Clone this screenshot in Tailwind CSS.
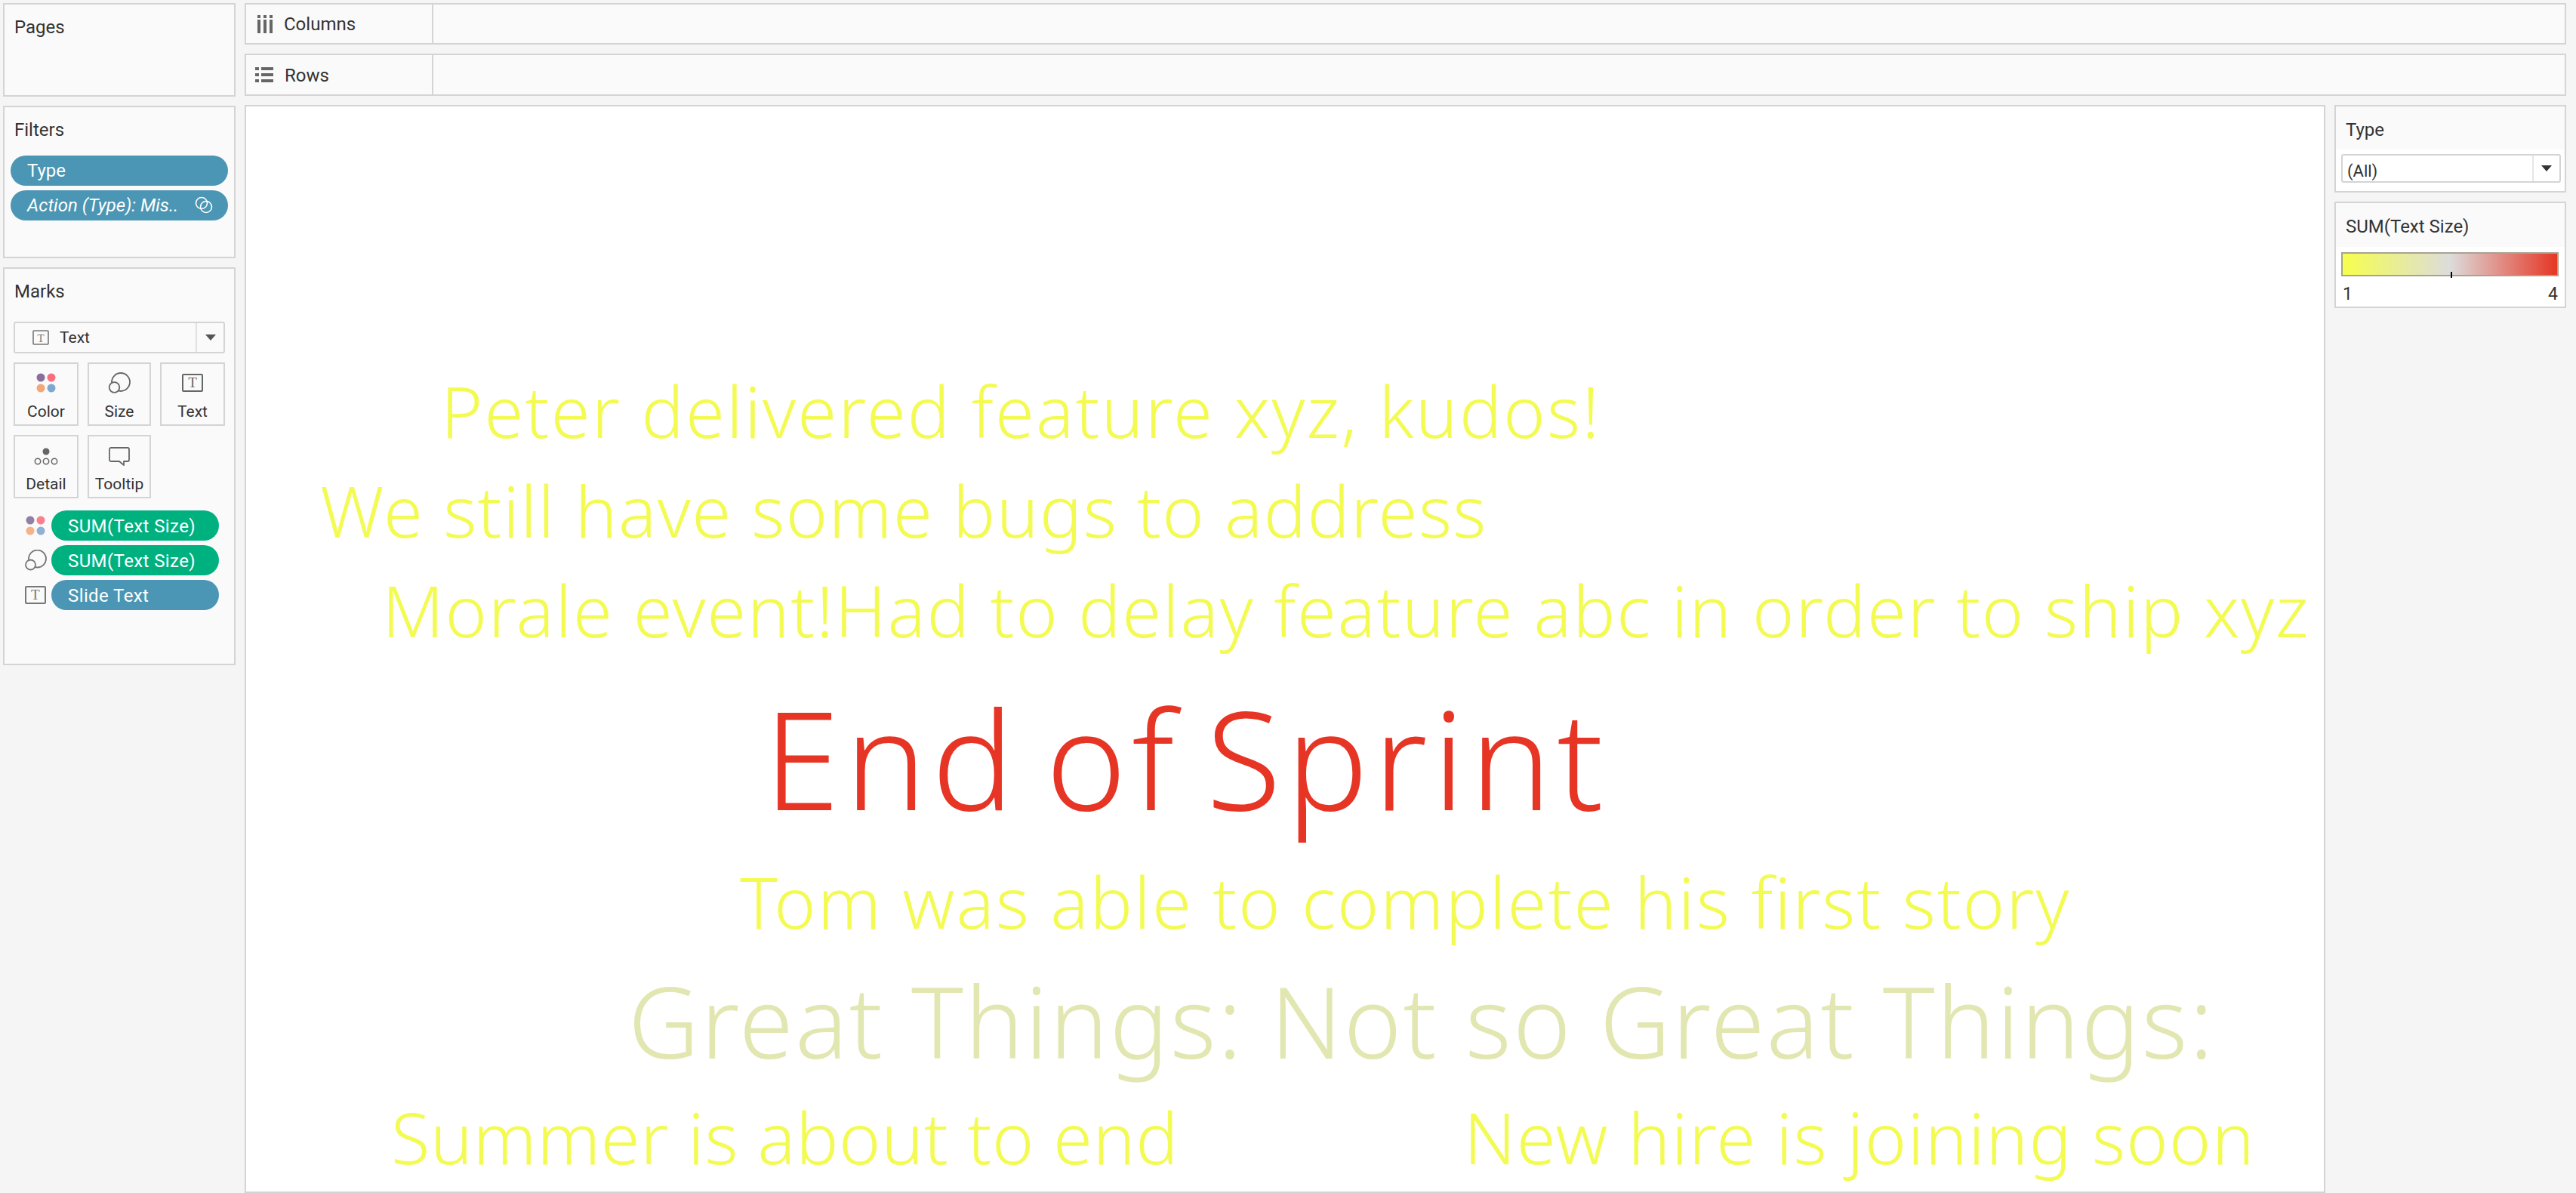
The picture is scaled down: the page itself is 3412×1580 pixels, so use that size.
<!DOCTYPE html>
<html><head><meta charset="utf-8"><script src="https://cdn.jsdelivr.net/npm/@tailwindcss/browser@4"></script></head>
<body class="bg-[#f5f5f5]">
<div class="w-[3412px] h-[1580px] overflow-hidden pl-[4px] pt-[4px] flex gap-[12px] font-['Roboto',sans-serif] text-[24px] text-[#333]">
 <div class="w-[308px] shrink-0 flex flex-col gap-[12px]">
  <section class="h-[124px] border-2 border-[#d4d4d4] bg-[#fafafa] pl-[13px] pt-[12px]">Pages</section>
  <section class="h-[202px] border-2 border-[#d4d4d4] bg-[#fafafa]">
   <div class="pl-[13px] pt-[12px] h-[64px]">Filters</div>
   <div class="flex flex-col gap-[6px] px-[8px]">
    <div class="h-[40px] rounded-full bg-[#4b96b4] text-white pl-[22px] flex items-center">Type</div>
    <div class="h-[40px] rounded-full bg-[#4b96b4] text-white pl-[22px] flex items-center italic whitespace-nowrap">Action (Type): Mis..
     <svg class="ml-auto mr-[20px]" width="24" height="24" viewBox="0 0 24 24" fill="none" stroke="#fff" stroke-width="1.6"><circle cx="9" cy="9" r="7.5"/><circle cx="15" cy="14" r="7.5"/></svg>
    </div>
   </div>
  </section>
  <section class="h-[527px] border-2 border-[#d4d4d4] bg-[#fafafa]">
   <div class="pl-[13px] pt-[12px] h-[70px]">Marks</div>
   <div class="mx-[12px] w-[280px] h-[42px] border-2 border-[#d4d4d4] rounded-[3px] flex items-center text-[21px]">
    <svg class="ml-[23px]" width="22" height="20" viewBox="0 0 22 20" fill="none"><rect x="1" y="1" width="20" height="18" rx="1" stroke="#777" stroke-width="1.6"/><text x="11" y="15.500" text-anchor="middle" font-family="Liberation Serif" font-size="15" fill="#777">T</text></svg>
    <span class="ml-[14px] pt-[2px]">Text</span>
    <div class="ml-auto w-[37px] h-full border-l-2 border-[#e0e0e0] flex items-center justify-center"><svg width="14" height="8" viewBox="0 0 14 8"><path d="M0 0h14l-7 8z" fill="#555"/></svg></div>
   </div>
   <div class="mx-[12px] mt-[12px] w-[280px] grid grid-cols-[86px_84px_86px] gap-[12px] text-[21px] text-center leading-none">
    <div class="h-[84px] border-2 border-[#d4d4d4] flex flex-col items-center pt-[12px] gap-[15px]">
     <svg width="26" height="26" viewBox="0 0 26 26"><circle cx="6" cy="6" r="5.500" fill="#8a6f9e"/><circle cx="20" cy="6" r="5.500" fill="#f96f80"/><circle cx="6" cy="20" r="5.500" fill="#f3a677"/><circle cx="20" cy="20" r="5.500" fill="#7fa8d0"/></svg><span>Color</span></div>
    <div class="h-[84px] border-2 border-[#d4d4d4] flex flex-col items-center pt-[11px] gap-[14px]">
     <svg width="30" height="28" viewBox="0 0 30 28" fill="#fafafa" stroke="#666" stroke-width="1.8"><circle cx="17" cy="13" r="12"/><circle cx="8.500" cy="20" r="6.800"/></svg><span>Size</span></div>
    <div class="h-[84px] border-2 border-[#d4d4d4] flex flex-col items-center pt-[13px] gap-[16px]">
     <svg width="28" height="24" viewBox="0 0 28 24" fill="none"><rect x="1" y="1" width="26" height="22" rx="1" stroke="#666" stroke-width="2"/><text x="14" y="18" text-anchor="middle" font-family="Liberation Serif" font-size="19" fill="#666">T</text></svg><span>Text</span></div>
    <div class="h-[84px] border-2 border-[#d4d4d4] flex flex-col items-center pt-[14px] gap-[15px]">
     <svg width="32" height="24" viewBox="0 0 32 24" fill="none" stroke="#666" stroke-width="1.500"><circle cx="16" cy="6" r="4.500" fill="#666" stroke="none"/><circle cx="5" cy="19" r="3.700"/><circle cx="16" cy="19" r="3.700"/><circle cx="27" cy="19" r="3.700"/></svg><span>Detail</span></div>
    <div class="h-[84px] border-2 border-[#d4d4d4] flex flex-col items-center pt-[13px] gap-[13px] whitespace-nowrap">
     <svg width="30" height="27" viewBox="0 0 30 27" fill="none" stroke="#666" stroke-width="1.800" stroke-linejoin="round"><path d="M4 2h22a2 2 0 0 1 2 2v14a2 2 0 0 1-2 2h-5v5l-6-5H4a2 2 0 0 1-2-2V4a2 2 0 0 1 2-2z"/></svg><span>Tooltip</span></div>
   </div>
   <div class="mt-[16px] flex flex-col gap-[6px] pl-[27px] text-[24px] tracking-[0.4px]">
    <div class="flex items-center gap-[6px]"><svg class="w-[29px] h-[28px]" viewBox="0 0 29 28"><circle cx="7" cy="7" r="5.500" fill="#9180a5"/><circle cx="21" cy="7" r="5.500" fill="#fa8090"/><circle cx="7" cy="21" r="5.500" fill="#f5b188"/><circle cx="21" cy="21" r="5.500" fill="#92b0d4"/></svg><div class="w-[222px] h-[40px] rounded-full bg-[#00b180] text-white pl-[22px] pt-[1px] flex items-center">SUM(Text Size)</div></div>
    <div class="flex items-center gap-[6px]"><svg class="w-[29px] h-[28px]" viewBox="0 0 29 28" fill="#fafafa" stroke="#777" stroke-width="1.800"><circle cx="16.500" cy="12" r="11.500"/><circle cx="7.500" cy="20" r="6.500"/></svg><div class="w-[222px] h-[40px] rounded-full bg-[#00b180] text-white pl-[22px] pt-[1px] flex items-center">SUM(Text Size)</div></div>
    <div class="flex items-center gap-[6px]"><svg class="w-[29px] h-[28px]" viewBox="0 0 29 28" fill="none"><rect x="1" y="3" width="26" height="22" rx="1" stroke="#777" stroke-width="2"/><text x="14" y="20" text-anchor="middle" font-family="Liberation Serif" font-size="19" fill="#777">T</text></svg><div class="w-[222px] h-[40px] rounded-full bg-[#4b96b4] text-white pl-[22px] pt-[1px] flex items-center">Slide Text</div></div>
   </div>
  </section>
 </div>
 <div class="w-[3075px] shrink-0 flex flex-col gap-[12px]">
  <div class="h-[56px] border-2 border-[#d4d4d4] bg-[#fafafa] flex items-center">
   <div class="w-[248px] h-full border-r-2 border-[#d4d4d4] flex items-center pl-[14px] gap-[14px]">
    <svg width="22" height="24" viewBox="0 0 22 24" fill="#666"><rect x="1" y="0" width="4" height="4"/><rect x="1" y="6" width="4" height="18"/><rect x="9" y="0" width="4" height="4"/><rect x="9" y="6" width="4" height="18"/><rect x="17" y="0" width="4" height="4"/><rect x="17" y="6" width="4" height="18"/></svg><span>Columns</span></div>
  </div>
  <div class="h-[56px] border-2 border-[#d4d4d4] bg-[#fafafa] flex items-center">
   <div class="w-[248px] h-full border-r-2 border-[#d4d4d4] flex items-center pl-[12px] gap-[15px]">
    <svg width="24" height="20" viewBox="0 0 24 20" fill="#666"><rect x="0" y="0" width="5" height="4"/><rect x="8" y="0" width="16" height="4"/><rect x="0" y="8" width="5" height="4"/><rect x="8" y="8" width="16" height="4"/><rect x="0" y="16" width="5" height="4"/><rect x="8" y="16" width="16" height="4"/></svg><span class="pt-[2px]">Rows</span></div>
  </div>
  <div class="flex gap-[12px] h-[1460px]">
   <main class="relative w-[2756px] h-full border-2 border-[#d4d4d4] bg-white font-['Noto_Sans',sans-serif] font-[350] text-[94px] leading-none whitespace-nowrap text-[#f3fb52]">
    <div class="absolute left-[258px] top-[356px] tracking-[2.15px]">Peter delivered feature xyz, kudos!</div>
    <div class="absolute left-[98px] top-[488px] tracking-[1.37px]">We still have some bugs to address</div>
    <div class="absolute left-[180px] top-[620px] tracking-[1.65px]">Morale event!Had to delay feature abc in order to ship xyz</div>
    <div class="absolute left-[686px] top-[772px] text-[181px] text-[#e73525] tracking-[7.2px] [word-spacing:-19px]">End of Sprint</div>
    <div class="absolute left-[654px] top-[1006px] tracking-[2px]">Tom was able to complete his first story</div>
    <div class="absolute left-[506px] top-[1146px] text-[130px] text-[#e2e6b0] tracking-[2.14px]">Great Things: Not so Great Things:</div>
    <div class="absolute left-[192px] top-[1318px] tracking-[0.6px]">Summer is about to end</div>
    <div class="absolute left-[1613px] top-[1318px] tracking-[1.3px]">New hire is joining soon</div>
   </main>
   <div class="w-[307px] flex flex-col gap-[12px]">
    <section class="h-[116px] border-2 border-[#d4d4d4] bg-white">
     <div class="h-[57px] bg-[#fafafa] pl-[13px] pt-[13px]">Type</div>
     <div class="mx-[7px] mt-[6px] h-[38px] w-[291px] border-2 border-[#d4d4d4] rounded-[3px] flex items-center pl-[6px] text-[22px]"><span class="pt-[8px]">(All)</span>
      <div class="ml-auto w-[36px] h-full border-l-2 border-[#e6e6e6] flex items-center justify-center"><svg width="14" height="8" viewBox="0 0 14 8"><path d="M0 0h14l-7 8z" fill="#333"/></svg></div>
     </div>
    </section>
    <section class="h-[141px] border-2 border-[#d4d4d4] bg-white">
     <div class="h-[58px] bg-[#fafafa] pl-[13px] pt-[13px]">SUM(Text Size)</div>
     <div class="relative mx-[7px] mt-[7px] h-[32px] w-[288px] border-2 border-[#a8a390] bg-[linear-gradient(to_right,#f6ff4d,#dcdcdc_50%,#e63624)]"><div class="absolute left-[143px] bottom-[-4px] w-[2px] h-[8px] bg-black"></div></div>
     <div class="mx-[9px] flex justify-between text-[23px] leading-none mt-[12px]"><span>1</span><span>4</span></div>
    </section>
   </div>
  </div>
 </div>
</div>
</body></html>
